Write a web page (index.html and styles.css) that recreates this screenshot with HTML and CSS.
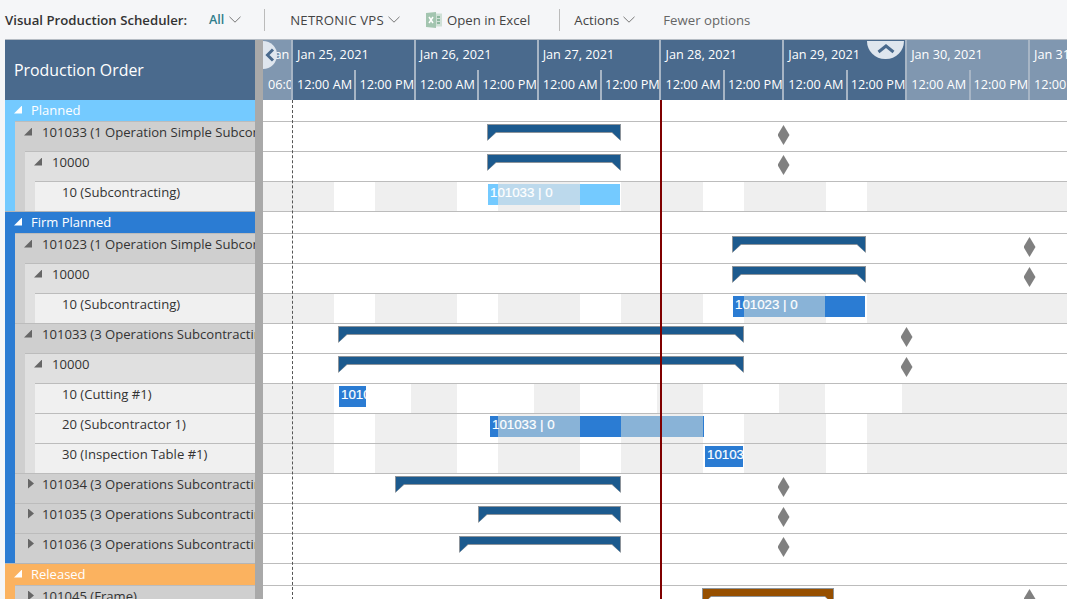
FILE: index.html
```html
<!DOCTYPE html>
<html lang="en">
<head>
    <meta charset="utf-8">
    <title>Visual Production Scheduler</title>
    <link rel="stylesheet" href="styles.css">
</head>

<body>
    <div class="toolbar">
        <span class="tool-title">Visual Production Scheduler:</span>
        <span class="tool-all">All</span>
        <svg class="chevron" viewBox="0 0 12 7"><path d="M.5.8 6 6.2 11.5.8"/></svg>
        <span class="tool-sep sep-first"></span>
        <span class="tool-item tool-vps">NETRONIC VPS</span>
        <svg class="chevron" viewBox="0 0 12 7"><path d="M.5.8 6 6.2 11.5.8"/></svg>
        <svg class="excel" viewBox="0 0 16 16">
            <path class="excel-page" d="M9 1.5h7v13H9z"/>
            <path class="excel-lines" d="M11 5h3M11 8h3M11 11h3"/>
            <path class="excel-sheet" d="M0 1 10 0v16L0 15z"/>
            <path class="excel-x" d="M3 5l4 6M7 5l-4 6"/>
        </svg>
        <span class="tool-item excel-label">Open in Excel</span>
        <span class="tool-sep sep-second"></span>
        <span class="tool-item">Actions</span>
        <svg class="chevron" viewBox="0 0 12 7"><path d="M.5.8 6 6.2 11.5.8"/></svg>
        <span class="tool-item tool-fewer">Fewer options</span>
    </div>

    <div class="main">

        <div class="tree">
            <div class="tree-head">Production Order</div>

            <div class="group group-planned">
                <div class="group-row"><i class="tw-open tw-white"></i>Planned</div>
                <div class="order">
                    <div class="node"><i class="tw-open"></i>101033 (1 Operation Simple Subcontracting)</div>
                    <div class="order">
                        <div class="node"><i class="tw-open"></i>10000</div>
                        <div class="leaves">
                            <div class="node node-leaf">10 (Subcontracting)</div>
                        </div>
                    </div>
                </div>
            </div>

            <div class="group group-firm">
                <div class="group-row"><i class="tw-open tw-white"></i>Firm Planned</div>
                <div class="order">
                    <div class="node"><i class="tw-open"></i>101023 (1 Operation Simple Subcontracting)</div>
                    <div class="order">
                        <div class="node"><i class="tw-open"></i>10000</div>
                        <div class="leaves">
                            <div class="node node-leaf">10 (Subcontracting)</div>
                        </div>
                    </div>
                </div>
                <div class="order">
                    <div class="node"><i class="tw-open"></i>101033 (3 Operations Subcontracting)</div>
                    <div class="order">
                        <div class="node"><i class="tw-open"></i>10000</div>
                        <div class="leaves">
                            <div class="node node-leaf">10 (Cutting #1)</div>
                            <div class="node node-leaf">20 (Subcontractor 1)</div>
                            <div class="node node-leaf">30 (Inspection Table #1)</div>
                        </div>
                    </div>
                </div>
                <div class="order">
                    <div class="node"><i class="tw-closed"></i>101034 (3 Operations Subcontracting)</div>
                    <div class="node"><i class="tw-closed"></i>101035 (3 Operations Subcontracting)</div>
                    <div class="node"><i class="tw-closed"></i>101036 (3 Operations Subcontracting)</div>
                </div>
            </div>

            <div class="group group-released">
                <div class="group-row"><i class="tw-open tw-white"></i>Released</div>
                <div class="order">
                    <div class="node"><i class="tw-closed"></i>101045 (Frame)</div>
                </div>
            </div>
        </div>

        <div class="splitter"></div>

        <div class="chart">
            <div class="scale">
                <div class="day day-past">
                    <div class="day-date">Jan 24, 2021</div>
                    <div class="day-hours"><span class="hour">06:00 AM</span></div>
                </div>
                <div class="day">
                    <div class="day-date">Jan 25, 2021</div>
                    <div class="day-hours"><span class="hour">12:00 AM</span><span class="hour">12:00 PM</span></div>
                </div>
                <div class="day">
                    <div class="day-date">Jan 26, 2021</div>
                    <div class="day-hours"><span class="hour">12:00 AM</span><span class="hour">12:00 PM</span></div>
                </div>
                <div class="day">
                    <div class="day-date">Jan 27, 2021</div>
                    <div class="day-hours"><span class="hour">12:00 AM</span><span class="hour">12:00 PM</span></div>
                </div>
                <div class="day">
                    <div class="day-date">Jan 28, 2021</div>
                    <div class="day-hours"><span class="hour">12:00 AM</span><span class="hour">12:00 PM</span></div>
                </div>
                <div class="day">
                    <div class="day-date">Jan 29, 2021</div>
                    <div class="day-hours"><span class="hour">12:00 AM</span><span class="hour">12:00 PM</span></div>
                </div>
                <div class="day day-faded">
                    <div class="day-date">Jan 30, 2021</div>
                    <div class="day-hours"><span class="hour">12:00 AM</span><span class="hour">12:00 PM</span></div>
                </div>
                <div class="day day-faded">
                    <div class="day-date">Jan 31, 2021</div>
                    <div class="day-hours"><span class="hour">12:00 AM</span><span class="hour">12:00 PM</span></div>
                </div>

                <div class="scroll-left">
                    <svg viewBox="0 0 10 14"><path d="M8 1.5 2.500 7 8 12.500"/></svg>
                </div>
                <div class="scroll-up">
                    <svg viewBox="0 0 18 10"><path d="M1.500 8 9 2l7.500 6"/></svg>
                </div>
            </div>

            <div class="rows">
                <div class="row row-group"></div>
                <div class="row">
                    <div class="summary" style="left:224px;width:134px"></div>
                    <div class="milestone" style="left:514px"></div>
                </div>
                <div class="row">
                    <div class="summary" style="left:224px;width:134px"></div>
                    <div class="milestone" style="left:514px"></div>
                </div>
                <div class="row shade-a">
                    <div class="task task-planned" style="left:225px;width:132px">
                        <span class="task-off" style="left:10px;width:82px"></span>
                        <span class="task-text">101033 | 0</span>
                    </div>
                </div>

                <div class="row row-group"></div>
                <div class="row">
                    <div class="summary" style="left:469px;width:134px"></div>
                    <div class="milestone" style="left:760px"></div>
                </div>
                <div class="row">
                    <div class="summary" style="left:469px;width:134px"></div>
                    <div class="milestone" style="left:760px"></div>
                </div>
                <div class="row shade-a">
                    <div class="task" style="left:470px;width:132px">
                        <span class="task-off" style="left:11px;width:81px"></span>
                        <span class="task-text">101023 | 0</span>
                    </div>
                </div>
                <div class="row">
                    <div class="summary" style="left:75px;width:406px"></div>
                    <div class="milestone" style="left:637px"></div>
                </div>
                <div class="row">
                    <div class="summary" style="left:75px;width:406px"></div>
                    <div class="milestone" style="left:637px"></div>
                </div>
                <div class="row shade-b">
                    <div class="task" style="left:76px;width:27px">
                        <span class="task-text">101033 | 0</span>
                    </div>
                </div>
                <div class="row shade-a">
                    <div class="task" style="left:227px;width:214px">
                        <span class="task-off" style="left:8px;width:82px"></span>
                        <span class="task-off" style="left:131px;width:82px"></span>
                        <span class="task-text">101033 | 0</span>
                    </div>
                </div>
                <div class="row shade-a">
                    <div class="task" style="left:442px;width:38px">
                        <span class="task-text">101033 | 0</span>
                    </div>
                </div>
                <div class="row">
                    <div class="summary" style="left:132px;width:226px"></div>
                    <div class="milestone" style="left:514px"></div>
                </div>
                <div class="row">
                    <div class="summary" style="left:215px;width:143px"></div>
                    <div class="milestone" style="left:514px"></div>
                </div>
                <div class="row">
                    <div class="summary" style="left:196px;width:162px"></div>
                    <div class="milestone" style="left:514px"></div>
                </div>

                <div class="row row-group"></div>
                <div class="row">
                    <div class="summary summary-released" style="left:439px;width:132px"></div>
                    <div class="milestone" style="left:760px"></div>
                </div>

                <div class="start-line"></div>
                <div class="today-line"></div>
            </div>
        </div>

    </div>
</body>
</html>
```

FILE: styles.css
```css
html, body {
	margin: 0;
	height: 100%;
	overflow: hidden;
}
body {
	background-color: #f5f6f8;
	font-family: "Open Sans", "Noto Sans", sans-serif;
	font-size: 13.1px;
	color: #333;
}

/* toolbar */
.toolbar {
	display: flex;
	align-items: center;
	height: 39px;
	padding-left: 5px;
	font-size: 13.2px;
	white-space: nowrap;
}
.tool-title {
	width: 204px;
	font-weight: 600;
}
.tool-all {
	margin-right: 1px;
	color: #2f7e8c;
	font-size: 12.5px;
	font-weight: 600;
}
.tool-item {
	color: #444;
}
.tool-vps {
	letter-spacing: .2px;
}
.tool-fewer {
	margin-left: 28px;
	color: #666;
}
.tool-sep {
	width: 1px;
	height: 22px;
	background-color: #bbb;
}
.sep-first {
	margin: 0 25px 0 23px;
}
.sep-second {
	margin: 0 14px 0 29px;
}
.chevron {
	width: 12px;
	height: 7px;
	margin-left: 4px;
	fill: none;
	stroke: #777;
	stroke-width: 1;
}
.excel {
	width: 16px;
	height: 16px;
	margin: 0 5px 0 26px;
}
.excel-page {
	fill: #cfe0d6;
}
.excel-lines {
	fill: none;
	stroke: #8fb8a0;
	stroke-width: 2;
}
.excel-sheet {
	fill: #a3c5b0;
}
.excel-x {
	fill: none;
	stroke: #fff;
	stroke-width: 1.5;
}

/* layout */
.main {
	display: flex;
	height: 560px;
	margin-left: 5px;
	border-top: 1px solid #b5bcc4;
	overflow: hidden;
}
.tree {
	flex: none;
	width: 250px;
	overflow: hidden;
	white-space: nowrap;
}
.splitter {
	flex: none;
	width: 8px;
	background-color: #a9a9a9;
}
.chart {
	flex: 1;
	min-width: 0;
	overflow: hidden;
}

/* tree */
.tree-head {
	display: flex;
	align-items: center;
	box-sizing: border-box;
	height: 60px;
	padding-left: 9px;
	background-color: #4a6a8d;
	color: #fff;
	font-size: 15.9px;
}
.group {
	padding-left: 10px;
}
.group-planned {
	background-color: #74caff;
}
.group-firm {
	background-color: #2b7cd3;
}
.group-released {
	background-color: #fbb25f;
}
.group-row {
	display: flex;
	align-items: center;
	box-sizing: border-box;
	height: 22px;
	margin-left: -10px;
	padding: 0 0 2px 9px;
	border-top: 1px solid #b5b5b5;
	color: #fff;
	font-size: 13px;
}
.group:nth-child(2) .group-row {
	height: 21px;
	border-top: 0;
}
.group-row i {
	margin-right: 9px;
}
.order {
	padding-left: 10px;
	background-color: #cfcfcf;
}
.order .order {
	background-color: #e0e0e0;
}
.leaves {
	background-color: #f0f0f0;
}
.node {
	display: flex;
	align-items: center;
	box-sizing: border-box;
	height: 30px;
	margin-left: -10px;
	padding: 0 0 10px 9px;
	border-top: 1px solid #bcbcbc;
	color: #333;
}
.node i {
	margin-right: 10px;
}
.node .tw-closed {
	margin-right: 8px;
}
.node-leaf {
	margin-left: 0;
	padding-left: 27px;
}
.tw-open {
	flex: none;
	width: 8px;
	height: 8px;
	background-color: #666;
	clip-path: polygon(100% 0, 100% 100%, 0 100%);
}
.tw-white {
	background-color: #fff;
}
.tw-closed {
	flex: none;
	width: 6px;
	height: 10px;
	margin-left: 4px;
	background-color: #666;
	clip-path: polygon(0 0, 100% 50%, 0 100%);
}

/* time scale */
.scale {
	position: relative;
	display: flex;
	height: 60px;
	color: #fff;
	font-size: 12.7px;
	white-space: nowrap;
}
.day {
	flex: none;
	box-sizing: border-box;
	width: 122.83px;
	border-left: 2px solid #a7b5c5;
	background-color: #4a6a8d;
	overflow: hidden;
}
.day-past {
	width: 28px;
	border-left: 0;
	background-color: #8097b0;
}
.day-faded {
	background-color: #8097b0;
}
.day-date {
	height: 30px;
	line-height: 28px;
	padding-left: 4px;
}
.day-past .day-date {
	padding-left: 8px;
}
.day-hours {
	display: flex;
	height: 30px;
	line-height: 28px;
}
.hour {
	flex: none;
	box-sizing: border-box;
	width: 61.4px;
	padding-left: 4px;
	overflow: hidden;
}
.hour + .hour {
	padding-left: 3px;
	border-left: 2px solid #a7b5c5;
}
.day-past .hour {
	padding-left: 5px;
}
.scroll-left {
	position: absolute;
	left: 0;
	top: 1px;
	width: 14px;
	height: 28px;
	border-radius: 0 14px 14px 0;
	background-color: #dfe6ee;
}
.scroll-left svg {
	display: block;
	width: 10px;
	height: 14px;
	margin: 7px 0 0 2px;
	fill: none;
	stroke: #4a6a8d;
	stroke-width: 3;
}
.scroll-up {
	position: absolute;
	left: 604px;
	top: 1px;
	width: 37px;
	height: 18px;
	border-radius: 0 0 19px 19px;
	background-color: #dfe6ee;
}
.scroll-up svg {
	display: block;
	width: 18px;
	height: 10px;
	margin: 3px auto 0;
	fill: none;
	stroke: #4a6a8d;
	stroke-width: 3;
}

/* gantt rows */
.rows {
	position: relative;
	background-color: #fff;
	height: 500px;
	overflow: hidden;
}
.row {
	position: relative;
	box-sizing: border-box;
	height: 30px;
	border-top: 1px solid #bcbcbc;
}
.row-group {
	height: 22px;
}
.row:first-child {
	height: 21px;
	border-top: 0;
}
.shade-a {
	background-image: linear-gradient(90deg,
		#efefef 71px, #fff 71px 112px,
		#efefef 112px 194px, #fff 194px 235px,
		#efefef 235px 317px, #fff 317px 358px,
		#efefef 358px 440px, #fff 440px 481px,
		#efefef 481px 563px, #fff 563px 604px,
		#efefef 604px);
}
.shade-b {
	background-image: linear-gradient(90deg,
		#efefef 71px, #fff 71px 148px,
		#efefef 148px 194px, #fff 194px 271px,
		#efefef 271px 317px, #fff 317px 394px,
		#efefef 394px 440px, #fff 440px 516px,
		#efefef 516px 562px, #fff 562px 639px,
		#efefef 639px);
}
.summary {
	position: absolute;
	top: 2px;
	height: 17px;
	background-color: #8d949b;
	clip-path: polygon(0 0, 100% 0, 100% 17px, calc(100% - 9px) 9px, 9px 9px, 0 17px);
}
.summary::before {
	content: "";
	position: absolute;
	top: 1px;
	left: 1px;
	right: 1px;
	bottom: 0;
	background-color: #1c5a8e;
	clip-path: polygon(0 0, 100% 0, 100% 15px, calc(100% - 8px) 7px, 8px 7px, 0 15px);
}
.summary-released::before {
	background-color: #964f00;
}
.milestone {
	position: absolute;
	top: 3px;
	width: 12px;
	height: 20px;
	margin-left: .5px;
	background-color: #808080;
	clip-path: polygon(50% 0, 100% 50%, 50% 100%, 0 50%);
}
.task {
	position: absolute;
	top: 2px;
	height: 21px;
	background-color: #2b7cd3;
	overflow: hidden;
}
.task-planned {
	background-color: #74caff;
}
.task-off {
	position: absolute;
	top: 0;
	bottom: 0;
	background-color: #89b3d7;
}
.task-planned .task-off {
	background-color: #bcd9ec;
}
.task-text {
	position: absolute;
	left: 2px;
	top: 0;
	line-height: 18px;
	color: #fff;
	font-family: "Liberation Sans", Arial, sans-serif;
	font-size: 13.3px;
	-webkit-text-stroke: .2px #fff;
	white-space: nowrap;
}
.start-line {
	position: absolute;
	left: 29px;
	top: 0;
	bottom: 0;
	border-left: 1px dashed #555;
}
.today-line {
	position: absolute;
	left: 397px;
	top: 0;
	bottom: 0;
	width: 2px;
	background-color: #7f0000;
}
```
